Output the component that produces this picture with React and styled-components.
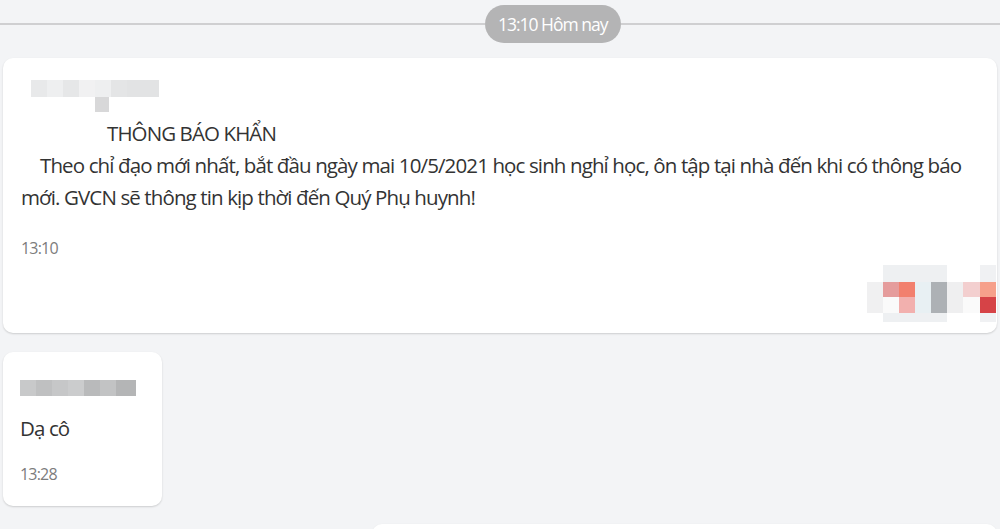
import React from 'react';
import styled, { createGlobalStyle } from 'styled-components';

const GlobalStyle = createGlobalStyle`
  body {
    margin: 0;
    background: #f3f4f6;
    font-family: "Open Sans", "Noto Sans", sans-serif;
    color: #333;
  }
`;

const Page = styled.div`
  display: flex;
  flex-direction: column;
  padding: 5px 3px 0 3px;
  height: 524px;
  overflow: hidden;
`;

const Divider = styled.div`
  display: flex;
  align-items: center;
  margin: 0 -3px;
  height: 38px;
`;

const Line = styled.div`
  flex: ${(p) => p.grow};
  height: 2px;
  background: #cfcfd1;
`;

const Pill = styled.div`
  height: 38px;
  padding: 0 13px;
  border-radius: 19px;
  background: #b4b4b5;
  color: #fff;
  font-size: 17.5px;
  letter-spacing: -1px;
  display: flex;
  align-items: center;
`;

const Card = styled.div`
  background: #fff;
  border-radius: 10px;
  box-shadow: 0 1px 2px rgba(0, 0, 0, 0.16);
  display: flex;
  flex-direction: column;
  margin-top: ${(p) => p.top || 0}px;
  margin-left: ${(p) => p.left || 0}px;
  width: ${(p) => (p.width ? p.width + 'px' : 'auto')};
  height: ${(p) => p.height}px;
  padding: ${(p) => p.pad};
  box-sizing: border-box;
  flex-shrink: 0;
`;

const Title = styled.div`
  font-size: 20.5px;
  line-height: 32px;
  margin-top: 5px;
  padding-left: 86px;
  letter-spacing: -0.9px;
`;

const Body = styled.div`
  font-size: 20.5px;
  line-height: 32px;
  text-indent: 19px;
  letter-spacing: -0.88px;
  padding-right: 10px;
`;

const Text = styled.div`
  font-size: 20.5px;
  line-height: 32px;
  margin-top: ${(p) => p.top}px;
  letter-spacing: -0.9px;
`;

const Time = styled.div`
  font-size: 16px;
  line-height: 20px;
  color: #7c7c7c;
  letter-spacing: -0.8px;
  margin-top: ${(p) => p.top}px;
`;

const Reactions = styled.div`
  align-self: flex-end;
  margin-right: -19px;
  margin-top: 7px;
  display: flex;
`;

const Blur = styled.svg`
  display: block;
  margin-left: ${(p) => p.left || 0}px;
  filter: blur(0.6px);
`;

const nameCells = [
  [0, 0, 16, 17, '#e8e9ea'],
  [16, 0, 16, 17, '#eeeff0'],
  [32, 0, 16, 17, '#e6e7e8'],
  [48, 0, 16, 17, '#f1f1f2'],
  [64, 0, 16, 17, '#eeeff0'],
  [80, 0, 16, 17, '#e4e5e6'],
  [96, 0, 32, 17, '#e2e3e4'],
  [64, 17, 14, 15, '#d8d8d9'],
];

const replyCells = [
  [0, 0, 16, 16, '#c8c9ca'],
  [16, 0, 16, 16, '#bfc0c1'],
  [32, 0, 16, 16, '#c6c7c8'],
  [48, 0, 16, 16, '#cbcccd'],
  [64, 0, 16, 16, '#b9babb'],
  [80, 0, 16, 16, '#c2c3c4'],
  [96, 0, 20, 16, '#b4b5b6'],
];

const reactCells = [
  [16, 0, 64, 57, '#eef0f2'],
  [113, 0, 16, 57, '#f0f1f3'],
  [0, 17, 16, 31, '#f0f0f1'],
  [16, 17, 16, 15, '#e59c9c'],
  [32, 17, 16, 15, '#f2806e'],
  [16, 32, 16, 16, '#fafafa'],
  [32, 32, 16, 16, '#f2b0ae'],
  [48, 17, 16, 31, '#e8f0f3'],
  [64, 17, 16, 31, '#adb1b5'],
  [80, 17, 16, 31, '#efeff0'],
  [96, 17, 17, 15, '#f3cfcf'],
  [96, 32, 17, 16, '#fafafa'],
  [113, 17, 16, 15, '#f6a08b'],
  [113, 32, 16, 16, '#d64347'],
];

function Mosaic({ cells, width, height, left }) {
  return (
    <Blur width={width} height={height} left={left} viewBox={`0 0 ${width} ${height}`}>
      {cells.map(([x, y, w, h, c], i) => (
        <rect key={i} x={x} y={y} width={w} height={h} fill={c} />
      ))}
    </Blur>
  );
}

export default function App() {
  return (
    <>
      <GlobalStyle />
      <Page>
        <Divider>
          <Line grow={483} />
          <Pill>13:10 Hôm nay</Pill>
          <Line grow={378} />
        </Divider>

        <Card top={15} height={275} pad="22px 20px 11px 18px">
          <Mosaic cells={nameCells} width={128} height={32} left={10} />
          <Title>THÔNG BÁO KHẨN</Title>
          <Body>
            Theo chỉ đạo mới nhất, bắt đầu ngày mai 10/5/2021 học sinh nghỉ học, ôn tập tại nhà đến khi có thông báo
            mới. GVCN sẽ thông tin kịp thời đến Quý Phụ huynh!
          </Body>
          <Time top={25}>13:10</Time>
          <Reactions>
            <Mosaic cells={reactCells} width={129} height={57} />
          </Reactions>
        </Card>

        <Card top={19} width={159} height={154} pad="28px 16px 22px 17px">
          <Mosaic cells={replyCells} width={116} height={16} />
          <Text top={16}>Dạ cô</Text>
          <Time top={20}>13:28</Time>
        </Card>

        <Card top={18} left={369} height={40} pad="0" />
      </Page>
    </>
  );
}
